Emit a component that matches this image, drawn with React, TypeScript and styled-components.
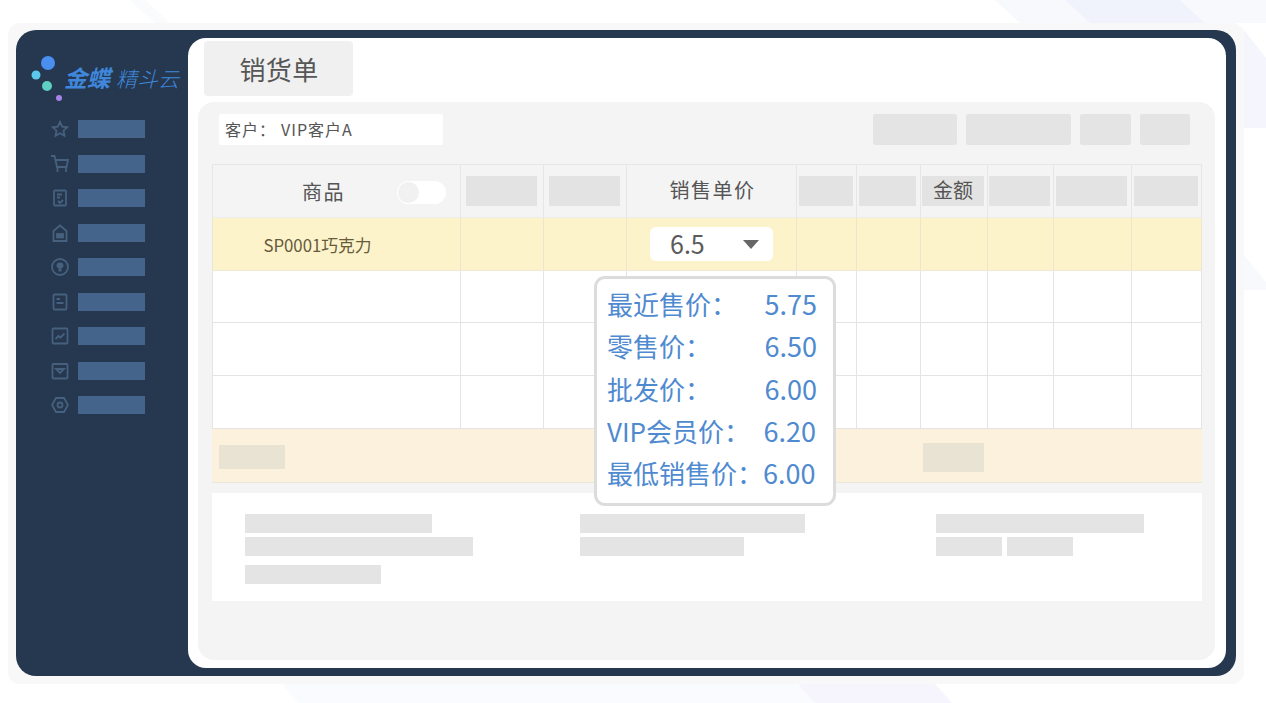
import React from "react";
import styled, { createGlobalStyle } from "styled-components";

const Global = createGlobalStyle`
  html, body { margin: 0; padding: 0; background: #fff; }
  body { font-family: "Noto Sans CJK SC", "Noto Sans", sans-serif; }
`;

const Page = styled.div`
  position: relative;
  width: 1266px;
  height: 703px;
  overflow: hidden;
  box-sizing: border-box;
  padding: 23px 22px 19px 8px;
  background: #fff;
`;
const Backdrop = styled.svg`
  position: absolute;
  inset: 0;
`;
const Shell = styled.div`
  position: relative;
  height: 100%;
  box-sizing: border-box;
  padding: 7px 8px 8px;
  background: #f8f8f9;
  border-radius: 12px;
`;
const Frame = styled.div`
  display: flex;
  height: 100%;
  background: #25384f;
  border-radius: 20px;
`;
const Sidebar = styled.aside`
  flex: none;
  width: 172px;
  box-sizing: border-box;
  padding-top: 24px;
`;
const Logo = styled.div`
  display: flex;
  align-items: flex-start;
  height: 66px;
  padding-left: 14px;
`;
const LogoText = styled.div`
  margin-top: 8px;
  line-height: 30px;
  font-style: italic;
  color: #4087dc;
  white-space: nowrap;
`;
const LogoStrong = styled.span`
  font-size: 23px;
  font-weight: 700;
  margin-right: 6px;
`;
const LogoLight = styled.span`
  font-size: 21px;
  font-weight: 300;
`;
const Nav = styled.nav`
  display: flex;
  flex-direction: column;
  gap: 16.5px;
`;
const NavRow = styled.div`
  display: flex;
  align-items: center;
  height: 18px;
  padding-left: 35px;
`;
const NavIcon = styled.svg`
  flex: none;
  width: 18px;
  height: 18px;
  margin-right: 9px;
  fill: none;
  stroke: #47607e;
  stroke-width: 1.8;
`;
const NavBar = styled.div`
  width: 67px;
  height: 18px;
  background: #44648b;
`;
const Main = styled.main`
  flex: 1;
  display: flex;
  flex-direction: column;
  margin: 8px 10px 8px 0;
  background: #fff;
  border-radius: 18px;
  min-width: 0;
`;
const Tab = styled.div`
  align-self: flex-start;
  width: 149px;
  height: 55px;
  margin: 3px 0 0 16px;
  border-radius: 4px;
  background: #f0f0f0;
  color: #565656;
  font-size: 26px;
  line-height: 55px;
  text-align: center;
  letter-spacing: 0.3px;
  text-indent: 1px;
`;
const Panel = styled.section`
  position: relative;
  flex: 1;
  margin: 6px 11px 8px 10px;
  padding: 12px 13px 0 14px;
  background: #f4f4f4;
  border-radius: 16px;
`;
const Toolbar = styled.div`
  display: flex;
  align-items: center;
  height: 31px;
  margin: 0 12px 19px 7px;
`;
const Customer = styled.div`
  width: 224px;
  height: 31px;
  box-sizing: border-box;
  padding-left: 6px;
  margin-right: auto;
  background: #fff;
  border-radius: 2px;
  color: #555;
  font-size: 16px;
  line-height: 30px;
  letter-spacing: 1px;
`;
const CustomerColon = styled.span`
  margin-right: 5px;
`;
const ToolButton = styled.div<{ $w: number }>`
  width: ${(p) => p.$w}px;
  height: 31px;
  margin-left: 9px;
  background: #e4e4e4;
  border-radius: 2px;
`;
const Table = styled.div`
  border-top: 1px solid #e6e6e6;
`;
const Row = styled.div<{ $h: number; $bg: string; $line: string }>`
  display: grid;
  grid-template-columns: 249px 83px 83px 170px 60px 64px 67px 66px 78px 70px;
  height: ${(p) => p.$h}px;
  box-sizing: border-box;
  background: ${(p) => p.$bg};
  border-bottom: 1px solid ${(p) => p.$line};
`;
const Cell = styled.div<{ $line: string }>`
  position: relative;
  display: flex;
  align-items: center;
  justify-content: center;
  min-width: 0;
  border-right: 1px solid ${(p) => p.$line};
  &:first-child {
    border-left: 1px solid ${(p) => p.$line};
  }
`;
const HeadText = styled.span`
  padding: 0 0 4px 2px;
  font-size: 20px;
  color: #555;
  letter-spacing: 1.5px;
`;
const HeadBlock = styled.div<{ $w: number }>`
  display: flex;
  align-items: center;
  justify-content: center;
  width: ${(p) => p.$w}px;
  height: 30px;
  margin-right: 2px;
  padding-bottom: 3px;
  box-sizing: border-box;
  background: #e3e3e3;
  color: #555;
  font-size: 20px;
`;
const ProductHead = styled.div`
  position: relative;
  left: -14px;
`;
const Toggle = styled.div`
  position: absolute;
  right: 14px;
  top: 16px;
  width: 49px;
  height: 23px;
  border-radius: 12px;
  background: #fff;
  &::before {
    content: "";
    position: absolute;
    left: 1px;
    top: 1px;
    width: 21px;
    height: 21px;
    border-radius: 50%;
    background: #f1f1f1;
  }
`;
const Product = styled.span`
  position: relative;
  left: -19px;
  top: 1px;
  font-size: 16.8px;
  color: #675b3c;
`;
const Select = styled.div`
  display: flex;
  align-items: center;
  justify-content: space-between;
  width: 123px;
  height: 34px;
  box-sizing: border-box;
  padding: 0 14px 2px 20px;
  background: #fff;
  border-radius: 6px;
  color: #5b5b5b;
  font-size: 25px;
`;
const Caret = styled.span`
  width: 0;
  height: 0;
  margin-top: 2px;
  border-left: 8px solid transparent;
  border-right: 8px solid transparent;
  border-top: 9px solid #666;
`;
const FootCell = styled.div<{ $pad?: number }>`
  display: flex;
  align-items: center;
  justify-content: ${(p) => (p.$pad ? "flex-start" : "center")};
  padding: 3px 0 0 ${(p) => p.$pad ?? 0}px;
`;
const FootBlock = styled.div<{ $w: number; $h: number; $shift?: number }>`
  width: ${(p) => p.$w}px;
  height: ${(p) => p.$h}px;
  margin-right: ${(p) => p.$shift ?? 0}px;
  background: #e9e3d3;
`;
const Summary = styled.div`
  display: grid;
  grid-template-columns: 335px 356px 1fr;
  height: 108px;
  box-sizing: border-box;
  margin-top: 10px;
  padding: 21px 33px;
  background: #fff;
`;
const SummaryCol = styled.div`
  display: flex;
  flex-direction: column;
  gap: 4px;
`;
const SummaryLine = styled.div`
  display: flex;
  gap: 5px;
`;
const Skeleton = styled.div<{ $w: number; $top?: number }>`
  width: ${(p) => p.$w}px;
  height: 19px;
  margin-top: ${(p) => p.$top ?? 0}px;
  background: #e4e4e4;
`;
const Popover = styled.div`
  position: absolute;
  left: 396px;
  top: 174px;
  width: 242px;
  height: 230px;
  box-sizing: border-box;
  padding: 4px 16px 0 10px;
  background: #fff;
  border: 3px solid #dcdcdc;
  border-radius: 11px;
`;
const PriceRow = styled.div<{ $inset?: number }>`
  display: flex;
  justify-content: space-between;
  height: 42.3px;
  padding-right: ${(p) => p.$inset ?? 0}px;
  color: #4f8ad0;
  font-size: 26px;
  line-height: 42.3px;
  white-space: nowrap;
`;
const PriceValue = styled.span`
  font-size: 27px;
`;

const prices: [string, string, number][] = [
  ["最近售价\uFF1A", "5.75", 0],
  ["零售价\uFF1A", "6.50", 0],
  ["批发价\uFF1A", "6.00", 0],
  ["VIP会员价\uFF1A", "6.20", 1],
  ["最低销售价\uFF1A", "6.00", 2],
];

const icons: React.ReactNode[] = [
  <path d="M9 2l2.200 4.700 5 .6-3.700 3.400 1 5L9 13.300l-4.500 2.400 1-5L1.800 7.300l5-.6z" />,
  <>
    <path d="M0 1h3.500l2.500 11h9.500l1.500-7H4.500" />
    <path d="M6.500 12v5M15 12v5" />
  </>,
  <>
    <rect x="3" y="1.500" width="12" height="15" rx="1" />
    <path d="M6 5.500h5M6 8.500h3M7 12l2 2 3-3" />
  </>,
  <>
    <path d="M2.500 7L9 1.500 15.500 7v10h-13z" />
    <rect x="6" y="10" width="6" height="3.500" fill="#47607e" />
  </>,
  <>
    <circle cx="9" cy="9" r="8" />
    <path d="M5.500 7.500a3.500 3 0 0 1 7 0c0 2-1.500 3-3.500 3s-3.500-1-3.500-3zM7.500 10.500h3v3h-3z" fill="#47607e" stroke="none" />
  </>,
  <>
    <rect x="2.500" y="1.500" width="13" height="15" rx="1" />
    <path d="M5.500 6h3.500M5.500 10h7" />
  </>,
  <>
    <rect x="1.500" y="1.500" width="15" height="15" rx="1" />
    <path d="M4.500 12l3-3 2 1.500 4-4" />
  </>,
  <>
    <rect x="1.500" y="2" width="15" height="14.500" rx="1" />
    <path d="M5 7h8l-4 4z" />
  </>,
  <>
    <path d="M5 2h8l4 7-4 7H5L1 9z" />
    <circle cx="9" cy="9" r="2.500" />
  </>,
];

const bodyLine = "#e4e4e4";
const yellowLine = "#eee6cc";
const headLine = "#e6e6e6";
const columns = Array.from({ length: 10 }, (_, i) => i);

export default function App() {
  return (
    <Page lang="zh-CN">
      <Global />
      <Backdrop width="1266" height="703" viewBox="0 0 1266 703">
        <polygon points="130,0 145,0 170,23 155,23" fill="#fafbfd" />
        <polygon points="995,0 1065,0 1090,23 1020,23" fill="#f7f9fd" />
        <polygon points="1065,0 1180,0 1205,23 1090,23" fill="#f1f3fc" />
        <polygon points="1180,0 1266,0 1266,23 1205,23" fill="#f8f9fd" />
        <polygon points="1244,30 1266,58 1266,128 1244,128" fill="#f4f5fd" />
        <polygon points="1244,255 1266,282 1266,290 1244,290" fill="#f8f9fd" />
        <polygon points="282,684 798,684 815,703 298,703" fill="#f9fbfe" />
        <polygon points="798,684 935,684 952,703 815,703" fill="#f6f5fd" />
      </Backdrop>
      <Shell>
        <Frame>
          <Sidebar>
            <Logo>
              <svg width="34" height="52" viewBox="0 0 34 52">
                <circle cx="18" cy="9" r="7" fill="#4a8ff0" />
                <circle cx="6" cy="21" r="4.500" fill="#5cc8ec" />
                <circle cx="17" cy="32" r="5" fill="#5ecfc0" />
                <circle cx="29" cy="44" r="3" fill="#a783e8" />
              </svg>
              <LogoText>
                <LogoStrong>金蝶</LogoStrong>
                <LogoLight>精斗云</LogoLight>
              </LogoText>
            </Logo>
            <Nav>
              {icons.map((icon, i) => (
                <NavRow key={i}>
                  <NavIcon viewBox="0 0 18 18">{icon}</NavIcon>
                  <NavBar />
                </NavRow>
              ))}
            </Nav>
          </Sidebar>
          <Main>
            <Tab>销货单</Tab>
            <Panel>
              <Toolbar>
                <Customer>
                  客户<CustomerColon>{"\uFF1A"}</CustomerColon>VIP客户A
                </Customer>
                <ToolButton $w={84} />
                <ToolButton $w={105} />
                <ToolButton $w={51} />
                <ToolButton $w={50} />
              </Toolbar>
              <Table>
                <Row $h={53} $bg="#f4f4f4" $line="#ececec">
                  <Cell $line={headLine}>
                    <ProductHead>
                      <HeadText>商品</HeadText>
                    </ProductHead>
                    <Toggle />
                  </Cell>
                  <Cell $line={headLine}><HeadBlock $w={71} /></Cell>
                  <Cell $line={headLine}><HeadBlock $w={71} /></Cell>
                  <Cell $line={headLine}><HeadText>销售单价</HeadText></Cell>
                  <Cell $line={headLine}><HeadBlock $w={54} /></Cell>
                  <Cell $line={headLine}><HeadBlock $w={57} /></Cell>
                  <Cell $line={headLine}><HeadBlock $w={62}>金额</HeadBlock></Cell>
                  <Cell $line={headLine}><HeadBlock $w={61} /></Cell>
                  <Cell $line={headLine}><HeadBlock $w={71} /></Cell>
                  <Cell $line={headLine}><HeadBlock $w={64} /></Cell>
                </Row>
                <Row $h={53} $bg="#fcf3cb" $line="#eee9d4">
                  {columns.map((c) => (
                    <Cell key={c} $line={yellowLine}>
                      {c === 0 && <Product>SP0001巧克力</Product>}
                      {c === 3 && (
                        <Select>
                          6.5
                          <Caret />
                        </Select>
                      )}
                    </Cell>
                  ))}
                </Row>
                {[52, 53, 53].map((h, r) => (
                  <Row key={r} $h={h} $bg="#fff" $line={bodyLine}>
                    {columns.map((c) => (
                      <Cell key={c} $line={bodyLine} />
                    ))}
                  </Row>
                ))}
                <Row $h={54} $bg="#fcf1dd" $line="#e9e6dc">
                  {columns.map((c) => (
                    <FootCell key={c} $pad={c === 0 ? 7 : undefined}>
                      {c === 0 && <FootBlock $w={66} $h={24} />}
                      {c === 6 && <FootBlock $w={61} $h={29} $shift={2} />}
                    </FootCell>
                  ))}
                </Row>
              </Table>
              <Summary>
                <SummaryCol>
                  <Skeleton $w={187} />
                  <Skeleton $w={228} />
                  <Skeleton $w={136} $top={5} />
                </SummaryCol>
                <SummaryCol>
                  <Skeleton $w={225} />
                  <Skeleton $w={164} />
                </SummaryCol>
                <SummaryCol>
                  <Skeleton $w={208} />
                  <SummaryLine>
                    <Skeleton $w={66} />
                    <Skeleton $w={66} />
                  </SummaryLine>
                </SummaryCol>
              </Summary>
              <Popover>
                {prices.map(([label, value, inset]) => (
                  <PriceRow key={label} $inset={inset}>
                    <span>{label}</span>
                    <PriceValue>{value}</PriceValue>
                  </PriceRow>
                ))}
              </Popover>
            </Panel>
          </Main>
        </Frame>
      </Shell>
    </Page>
  );
}
